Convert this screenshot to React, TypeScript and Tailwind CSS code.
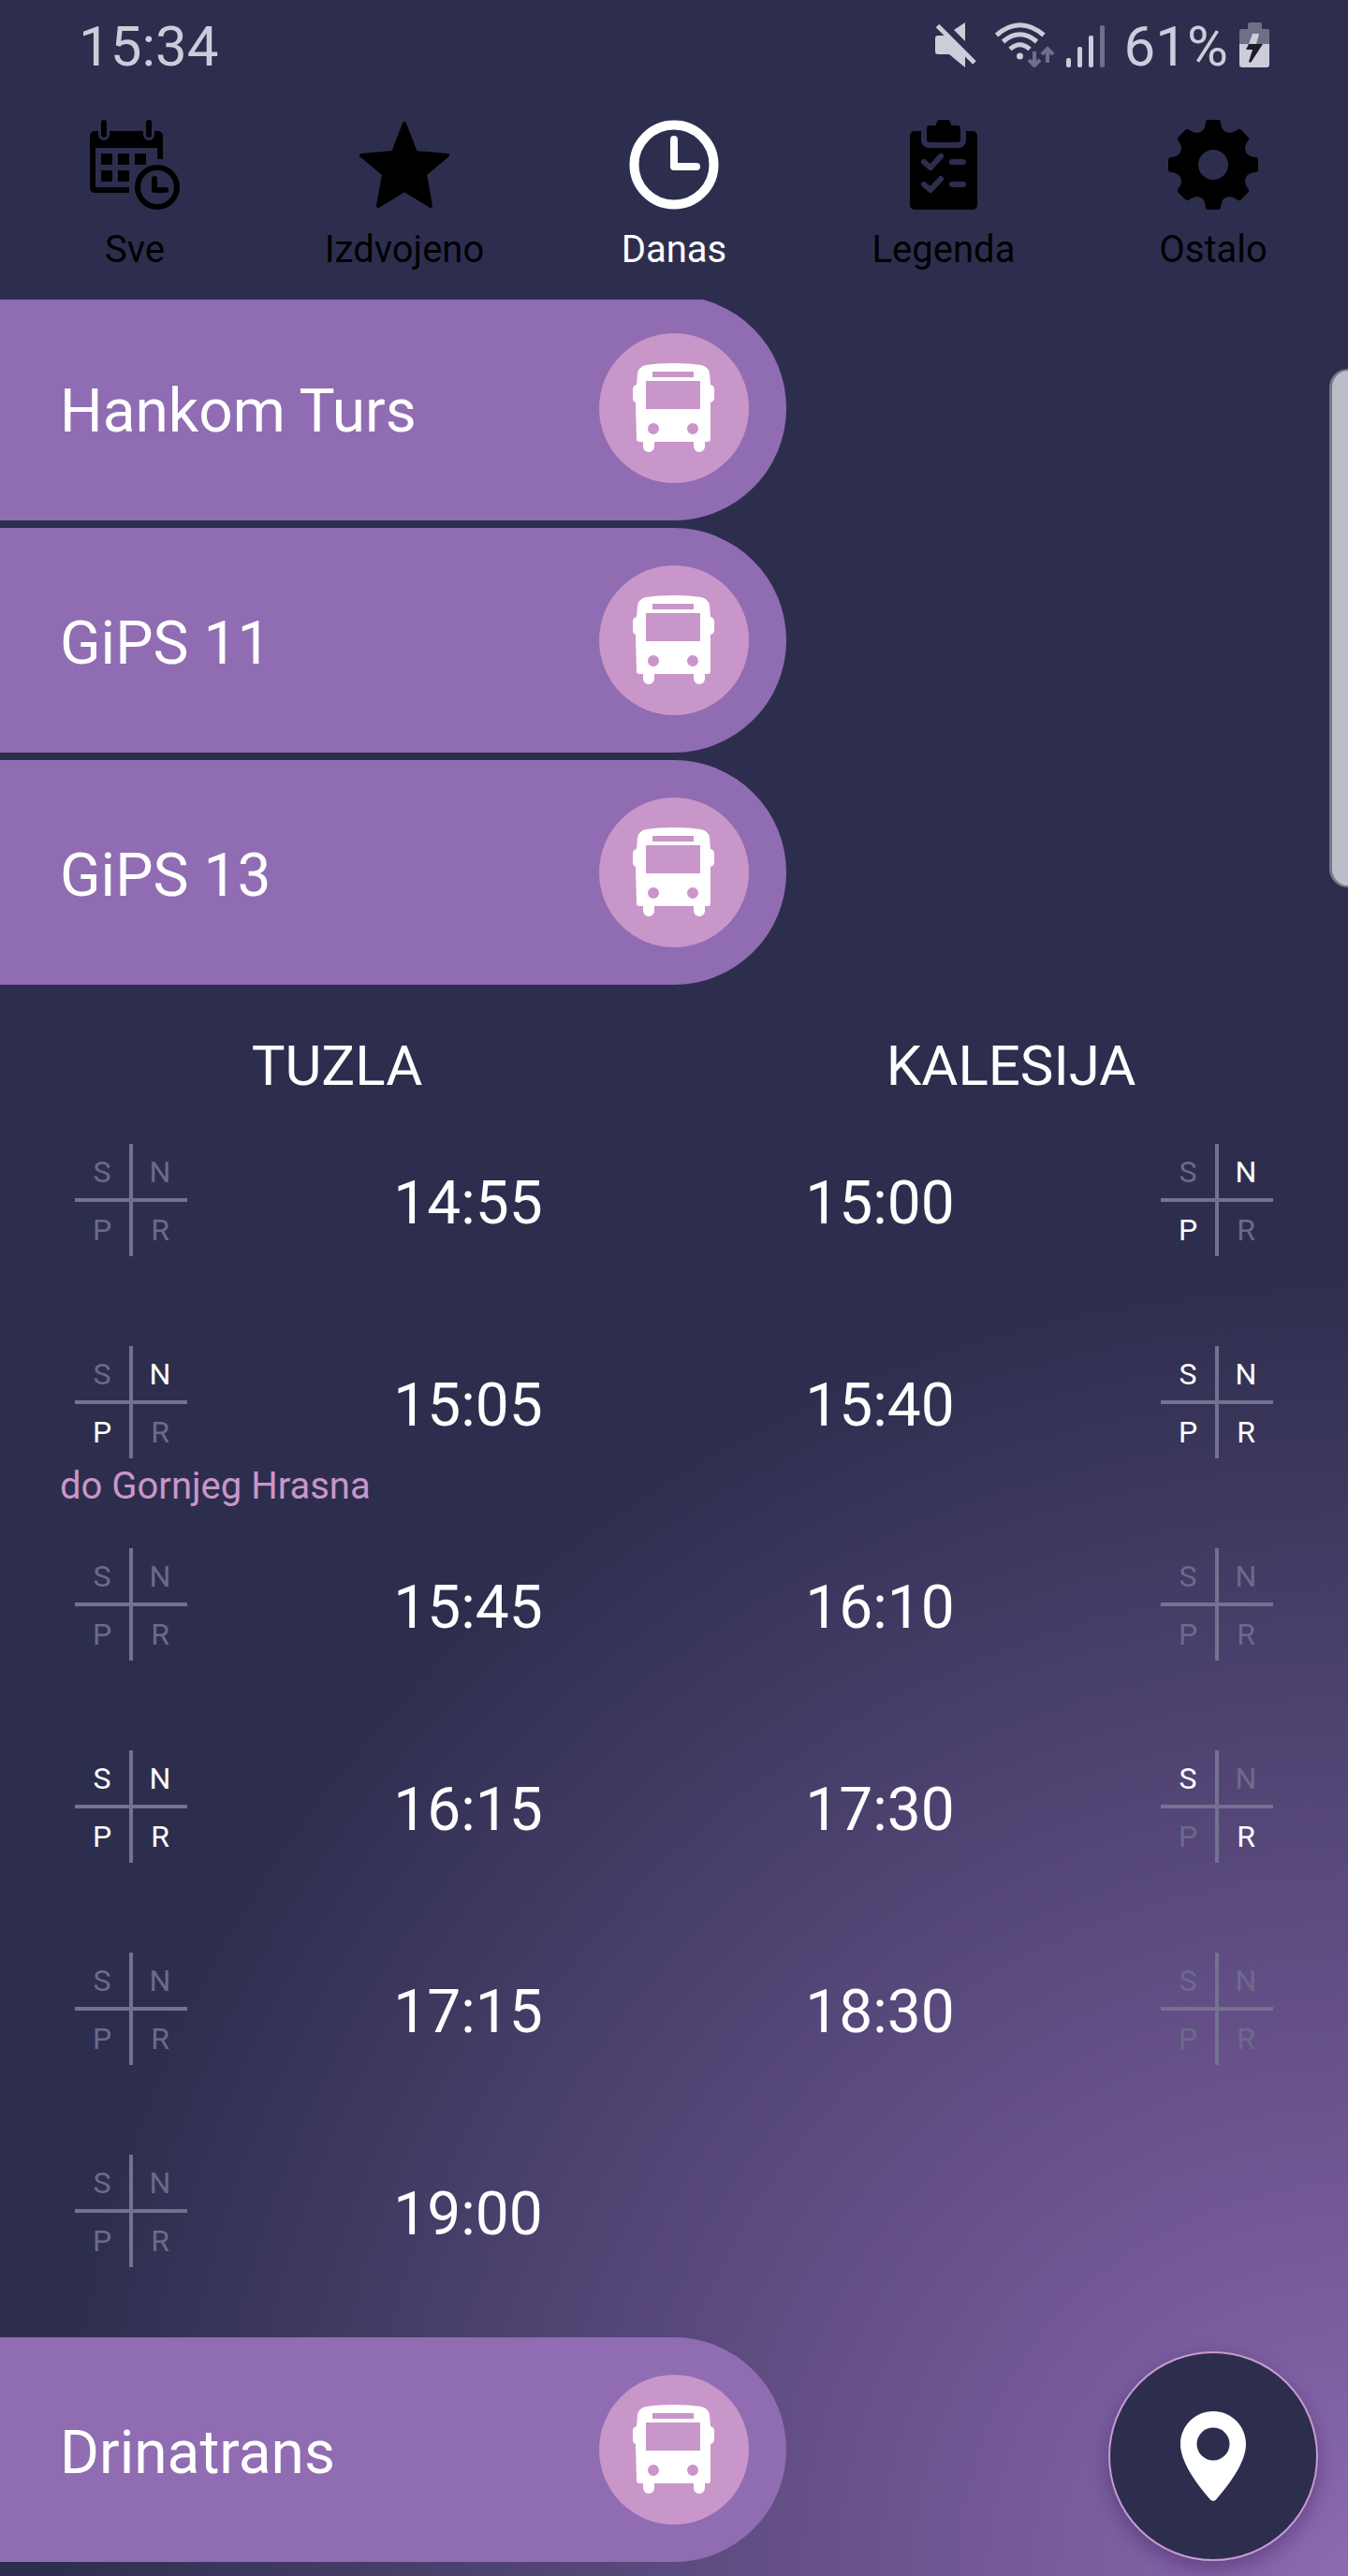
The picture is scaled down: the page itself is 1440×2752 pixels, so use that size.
import { useState } from "react";
import type { ReactNode } from "react";

interface Departure {
  time: string;
  // active day groups, any of S N P R
  days: string;
  note?: string;
}

interface Timetable {
  from: string;
  to: string;
  fromDepartures: Departure[];
  toDepartures: Departure[];
}

interface Carrier {
  name: string;
  timetable?: Timetable;
}

const carriers: Carrier[] = [
  { name: "Hankom Turs" },
  { name: "GiPS 11" },
  {
    name: "GiPS 13",
    timetable: {
      from: "TUZLA",
      to: "KALESIJA",
      fromDepartures: [
        { time: "14:55", days: "" },
        { time: "15:05", days: "NP", note: "do Gornjeg Hrasna" },
        { time: "15:45", days: "" },
        { time: "16:15", days: "SNPR" },
        { time: "17:15", days: "" },
        { time: "19:00", days: "" },
      ],
      toDepartures: [
        { time: "15:00", days: "NP" },
        { time: "15:40", days: "SNPR" },
        { time: "16:10", days: "" },
        { time: "17:30", days: "SR" },
        { time: "18:30", days: "" },
      ],
    },
  },
  { name: "Drinatrans" },
];

function CalendarIcon() {
  return (
    <svg viewBox="0 0 96 96" className="size-24" fill="currentColor" aria-hidden="true">
      <path d="M5 12H9V16A6 6 0 0 0 21 16V12H57V16A6 6 0 0 0 69 16V12H73A5 5 0 0 1 78 17V42H72V30H6V72H42V78H5A5 5 0 0 1 0 73V17A5 5 0 0 1 5 12Z" />
      <rect x="12" y="0" width="6" height="19" rx="3" />
      <rect x="60" y="0" width="6" height="19" rx="3" />
      <path d="M12 36h12v12H12zM30 36h12v12H30zM48 36h12v12H48zM12 54h12v12H12zM30 54h12v12H30z" />
      <circle cx="72" cy="72" r="21" fill="none" stroke="currentColor" strokeWidth="6" />
      <path d="M69 63V75H81" fill="none" stroke="currentColor" strokeWidth="6" strokeLinecap="round" strokeLinejoin="round" />
    </svg>
  );
}

function StarIcon() {
  return (
    <svg viewBox="0 0 96 96" className="size-24" fill="currentColor" stroke="currentColor" strokeWidth="4" strokeLinejoin="round" aria-hidden="true">
      <path d="M48 4L60 35L94 38L70 58L76 92L48 75L20 92L26 58L2 38L36 35Z" />
    </svg>
  );
}

function ClockIcon() {
  return (
    <svg viewBox="0 0 96 96" className="size-24" fill="none" stroke="currentColor" aria-hidden="true">
      <circle cx="48" cy="48" r="42.5" strokeWidth="10" />
      <path d="M48 21V50H72" strokeWidth="8" strokeLinecap="round" strokeLinejoin="round" />
    </svg>
  );
}

function ClipboardIcon() {
  return (
    <svg viewBox="0 0 96 96" className="size-24" aria-hidden="true">
      <path
        d="M17 12H24V22A8 8 0 0 0 32 30H64A8 8 0 0 0 72 22V12H79A5 5 0 0 1 84 17V91A5 5 0 0 1 79 96H17A5 5 0 0 1 12 91V17A5 5 0 0 1 17 12Z"
        fill="currentColor"
      />
      <path d="M33 6H40A8 8 0 0 1 56 6H63A3 3 0 0 1 66 9V21A3 3 0 0 1 63 24H33A3 3 0 0 1 30 21V9A3 3 0 0 1 33 6Z" fill="currentColor" />
      <path
        d="M27 45L34 51L45 39M57 45H69M27 69L34 75L45 63M57 69H69"
        fill="none"
        stroke="#2d2e4e"
        strokeWidth="6"
        strokeLinecap="round"
        strokeLinejoin="round"
      />
    </svg>
  );
}

function GearIcon() {
  return (
    <svg viewBox="0 0 96 96" className="size-24" fill="currentColor" fillRule="evenodd" aria-hidden="true">
      <path d="M43 0H53Q56 0 56 3Q57 14 66 14Q71 13 74 10.500Q76 9 78 11L85 18Q87 20 85.500 22Q82 26 82 30Q82 39 93 40Q96 40 96 43V53Q96 56 93 56Q82 57 82 66Q82 70 85.500 74Q87 76 85 78L78 85Q76 87 74 85.500Q71 83 66 82Q57 82 56 93Q56 96 53 96H43Q40 96 40 93Q39 82 30 82Q25 83 22 85.500Q20 87 18 85L11 78Q9 76 10.500 74Q14 70 14 66Q14 57 3 56Q0 56 0 53V43Q0 40 3 40Q14 39 14 30Q14 26 10.500 22Q9 20 11 18L18 11Q20 9 22 10.500Q25 13 30 14Q39 14 40 3Q40 0 43 0ZM48 32A16 16 0 1 0 48 64A16 16 0 1 0 48 32Z" />
    </svg>
  );
}

function BusIcon() {
  return (
    <svg viewBox="0 0 96 96" className="size-24" fill="white" fillRule="evenodd" aria-hidden="true">
      <path d="M9 11Q10 4 18 2Q30 0 47.500 0Q65 0 77 2Q85 4 86 11L87 23Q91 24 91 28V37Q91 41 87 42V81Q87 84 84 84H81V89A6 6 0 0 1 69 89V84H27V89A6 6 0 0 1 15 89V84H11Q8 84 8 81L7 42Q4 41 4 37V28Q4 24 8 23ZM25 9V15H69V9ZM18 19V49H76V19ZM26 64A6 6 0 1 0 26 76A6 6 0 1 0 26 64ZM68 64A6 6 0 1 0 68 76A6 6 0 1 0 68 64Z" />
    </svg>
  );
}

const tabs: { label: string; icon: ReactNode }[] = [
  { label: "Sve", icon: <CalendarIcon /> },
  { label: "Izdvojeno", icon: <StarIcon /> },
  { label: "Danas", icon: <ClockIcon /> },
  { label: "Legenda", icon: <ClipboardIcon /> },
  { label: "Ostalo", icon: <GearIcon /> },
];

function StatusBar() {
  return (
    <div className="flex h-24 items-center justify-between px-[84px] text-[60px] text-[#cdcdda]">
      <span className="pt-1">15:34</span>
      <div className="flex items-center">
        <svg viewBox="0 0 44 48" className="mr-5 h-12 w-11" fill="#cdcdda" aria-hidden="true">
          <path d="M3 14H13L32 35V48L15 34H3Q0 34 0 31V17Q0 14 3 14Z" />
          <path d="M20 8L32 0V20Z" />
          <path d="M2.500 3.500L42 43" stroke="#cdcdda" strokeWidth="5" />
        </svg>
        <svg viewBox="0 0 64 48" className="mr-3 h-12 w-16" fill="none" aria-hidden="true">
          <g stroke="#cdcdda" strokeWidth="5">
            <path d="M1.500 13.500Q26.500 -8 52 13.500" />
            <path d="M8.500 20.500Q26.500 5 44.500 20.500" />
            <path d="M16 28.500Q26.500 19 37 28.500" />
          </g>
          <circle cx="26.500" cy="36" r="3.500" fill="#cdcdda" />
          <g stroke="#6f6f8a" strokeWidth="4">
            <path d="M42 31V46M36 40L42 46L48 40" />
            <path d="M56 43V28M50 34L56 28L62 34" />
          </g>
        </svg>
        <svg viewBox="0 0 42 48" className="mr-5 h-12 w-[42px]" fill="#cdcdda" aria-hidden="true">
          <rect x="0" y="38" width="5" height="10" rx="2" />
          <rect x="12" y="26" width="5" height="22" rx="2" />
          <rect x="24" y="14" width="5" height="34" rx="2" />
          <rect x="36" y="3" width="5" height="45" rx="2" fill="#6f6f8a" />
        </svg>
        <span className="mr-3 pt-1">61%</span>
        <svg viewBox="0 0 32 48" className="h-12 w-8" aria-hidden="true">
          <path d="M9 2Q9 0 11 0H22Q24 0 24 2V7H30Q32 7 32 9V23H0V9Q0 7 2 7H9Z" fill="#6f6f8a" />
          <path d="M0 23H32V45Q32 48 29 48H3Q0 48 0 45Z" fill="#cdcdda" />
          <path d="M14 12H21L18 23H10Z" fill="#cdcdda" />
          <path d="M10 23H25L12 43L10 42L14 29H7Z" fill="#1c1c26" />
        </svg>
      </div>
    </div>
  );
}

function DayCross({ days }: { days: string }) {
  const tone = (day: string) => (days.includes(day) ? "text-white" : "text-[#6c6a8a]");

  return (
    <div className="mx-auto grid size-[120px] grid-cols-2 grid-rows-2 text-center text-[32px] leading-[60px]">
      <span className={`border-r-2 border-b-2 border-[#747191] ${tone("S")}`}>S</span>
      <span className={`border-b-2 border-l-2 border-[#747191] ${tone("N")}`}>N</span>
      <span className={`border-t-2 border-r-2 border-[#747191] ${tone("P")}`}>P</span>
      <span className={`border-t-2 border-l-2 border-[#747191] ${tone("R")}`}>R</span>
    </div>
  );
}

function TimetableView({ timetable }: { timetable: Timetable }) {
  const { from, to, fromDepartures, toDepartures } = timetable;
  const count = Math.max(fromDepartures.length, toDepartures.length);

  return (
    <table className="mb-[15px] w-full table-fixed text-[64px] leading-[128px] text-white">
      <colgroup>
        <col className="w-[280px]" />
        <col />
        <col />
        <col className="w-[280px]" />
      </colgroup>
      <thead>
        <tr className="text-[60px] leading-[94px]">
          <th colSpan={2} className="pt-10 font-normal">{from}</th>
          <th colSpan={2} className="pt-10 font-normal">{to}</th>
        </tr>
      </thead>
      <tbody>
        {Array.from({ length: count }, (_, i) => {
          const left = fromDepartures[i];
          const right = toDepartures[i];
          return (
            <tr key={i} className="h-[216px] text-center align-top">
              <td className="pt-9">
                {left && <DayCross days={left.days} />}
                {left?.note && (
                  <p className="pl-16 text-left text-[40px] leading-[60px] whitespace-nowrap text-[#c996c9]">
                    {left.note}
                  </p>
                )}
              </td>
              <td className="pt-9">{left?.time}</td>
              <td className="pt-9">{right?.time}</td>
              <td className="pt-9">{right && <DayCross days={right.days} />}</td>
            </tr>
          );
        })}
      </tbody>
    </table>
  );
}

export default function App() {
  const [activeTab, setActiveTab] = useState("Danas");
  const [openCarrier, setOpenCarrier] = useState<string | null>("GiPS 13");

  return (
    <div className="relative flex min-h-screen flex-col bg-[#2d2e4e] bg-[radial-gradient(circle_97vw_at_bottom_right,#8d69b2,#2d2e4e)] font-['Roboto',sans-serif]">
      <StatusBar />

      <nav className="grid h-56 grid-cols-5">
        {tabs.map((tab) => (
          <button
            key={tab.label}
            onClick={() => setActiveTab(tab.label)}
            className={`flex flex-col items-center gap-4 pt-8 text-[40px] leading-[54px] ${
              activeTab === tab.label ? "text-white" : "text-black"
            }`}
          >
            {tab.icon}
            <span>{tab.label}</span>
          </button>
        ))}
      </nav>

      {/* Carriers, the list starts slightly scrolled under the tabs */}
      <main className="overflow-hidden">
        <div className="-mt-1">
          {carriers.map((carrier) => {
            const isOpen = carrier.timetable && openCarrier === carrier.name;
            return (
              <section key={carrier.name} className={isOpen ? "" : "mb-2"}>
                <button
                  onClick={() => setOpenCarrier(isOpen ? null : carrier.name)}
                  className="flex h-60 w-7/12 items-center justify-between rounded-r-full bg-[#906cb3] pr-10 pl-16 text-[64px] text-white"
                >
                  <span className="pt-2">{carrier.name}</span>
                  <span className="flex size-40 items-center justify-center rounded-full bg-[#c996c9]">
                    <BusIcon />
                  </span>
                </button>
                {isOpen && carrier.timetable && <TimetableView timetable={carrier.timetable} />}
              </section>
            );
          })}
        </div>
      </main>

      {/* Edge panel handle */}
      <div className="absolute top-[394px] right-0 h-[554px] w-5 rounded-l-[20px] border-y-2 border-l-3 border-[#777788] bg-[#bdbdc9]" />

      <button
        aria-label="Lokacija"
        className="fixed right-8 bottom-4 flex size-56 items-center justify-center rounded-full border-2 border-[#c79bd0] bg-[#2d2e4e] shadow-[0_8px_20px_rgba(50,20,80,0.4)]"
      >
        <svg viewBox="0 0 70 96" className="h-24 w-[70px]" fill="white" fillRule="evenodd" aria-hidden="true">
          <path d="M35 0C15.700 0 0 15.700 0 35C0 53 15 75 32 94.500Q35 97 38 94.500C55 75 70 53 70 35C70 15.700 54.300 0 35 0ZM35 17.500A17.500 17.500 0 1 1 35 52.500A17.500 17.500 0 1 1 35 17.500Z" />
        </svg>
      </button>
    </div>
  );
}
